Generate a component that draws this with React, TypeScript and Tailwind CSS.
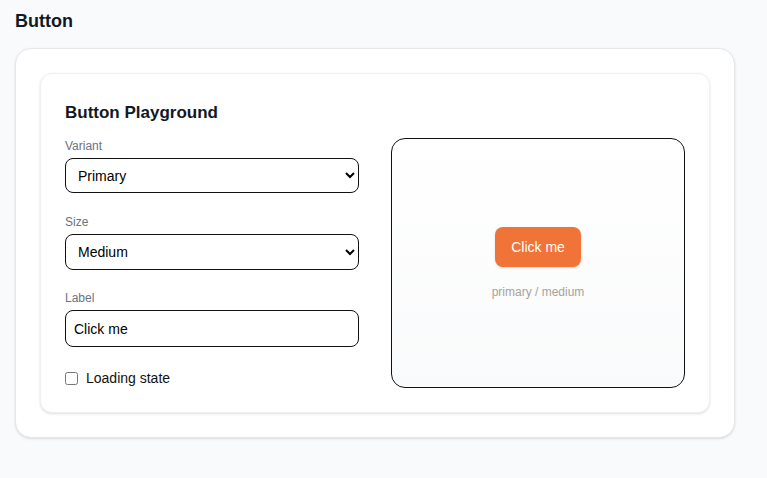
import React, { useState } from "react";

export default function App() {
  const [variant, setVariant] = useState("primary");
  const [size, setSize] = useState("medium");
  const [label, setLabel] = useState("Click me");
  const [loading, setLoading] = useState(false);

  return (
    <div
      className="min-h-[478px] bg-[#f9fafb] px-[15px] pt-[11px] pb-10 text-[#111827]"
      style={{ fontFamily: '"Liberation Sans", Arial, sans-serif' }}
    >
      <h1 className="text-[18px] leading-[21px] font-bold">Button</h1>
      <div className="mt-[16px] w-[720px] rounded-2xl border border-[#e5e7eb] bg-white p-6 shadow-sm">
        <div className="rounded-xl border border-[#eef0f3] bg-white p-6 shadow-sm">
          <h2 className="text-[17px] leading-[22px] font-bold mt-[4px]">Button Playground</h2>
          <div className="mt-[14px] grid grid-cols-2 gap-8">
            <div className="flex flex-col">
              <label className="text-[12px] leading-[16px] text-[#6b7280]">Variant</label>
              <select
                value={variant}
                onChange={(e) => setVariant(e.target.value)}
                className="mt-[4px] h-[35px] w-full rounded-lg border border-[#111] bg-white pl-[8px] pr-[4px] text-[14px] text-black"
              >
                <option value="primary">Primary</option>
                <option value="secondary">Secondary</option>
                <option value="ghost">Ghost</option>
              </select>
              <label className="mt-[21px] text-[12px] leading-[16px] text-[#6b7280]">Size</label>
              <select
                value={size}
                onChange={(e) => setSize(e.target.value)}
                className="mt-[4px] h-[36px] w-full rounded-lg border border-[#111] bg-white pl-[8px] pr-[4px] text-[14px] text-black"
              >
                <option value="small">Small</option>
                <option value="medium">Medium</option>
                <option value="large">Large</option>
              </select>
              <label className="mt-[20px] text-[12px] leading-[16px] text-[#6b7280]">Label</label>
              <input
                value={label}
                onChange={(e) => setLabel(e.target.value)}
                className="mt-[4px] h-[37px] w-full rounded-lg border border-[#111] bg-white px-[8px] text-[14px] text-black outline-none"
              />
              <label className="mt-[21px] flex items-center gap-[8px] text-[14px] leading-[20px] text-[#111]">
                <input
                  type="checkbox"
                  checked={loading}
                  onChange={(e) => setLoading(e.target.checked)}
                  className="m-0 h-[13px] w-[13px]"
                />
                Loading state
              </label>
            </div>
            <div className="flex h-[250px] flex-col items-center justify-center rounded-[14px] border border-[#111] bg-gradient-to-b from-white to-[#f9fafb] pt-[2px]">
              <button className="h-[40px] w-[86px] rounded-lg bg-[#f07338] text-[14px] text-white shadow-sm">
                {loading ? "Loading…" : label}
              </button>
              <div className="mt-[16px] text-[12px] text-[#a8a29e]">
                {variant} / {size}
              </div>
            </div>
          </div>
        </div>
      </div>
    </div>
  );
}
